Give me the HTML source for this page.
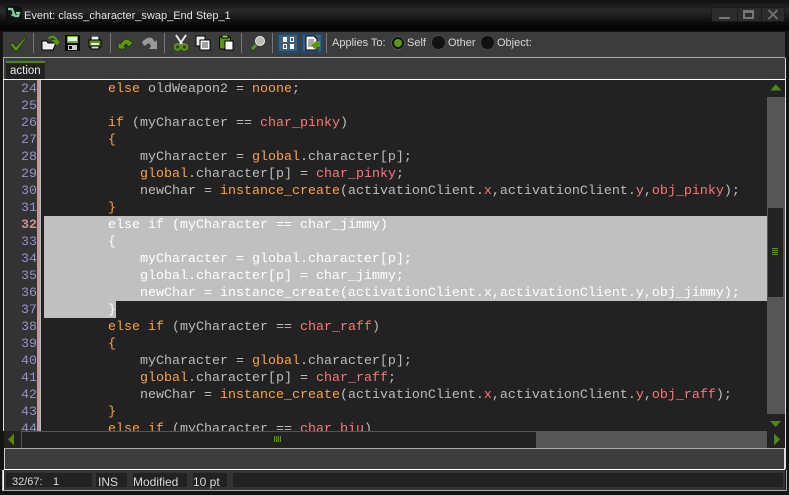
<!DOCTYPE html>
<html><head><meta charset="utf-8">
<style>
html,body{margin:0;padding:0;background:#111;}
#w{position:relative;width:789px;height:495px;overflow:hidden;background:#131313;font-family:"Liberation Sans",sans-serif;}
.a{position:absolute;}
#code{position:absolute;left:44px;top:80px;width:723px;height:351px;overflow:hidden;background:#222;}
.l{position:absolute;left:0;margin-top:1px;height:17px;font:13.33px/17px "Liberation Mono",monospace;color:#bcbcbc;white-space:pre;}
.k{color:#f9a24a;}.s{color:#fb7878;}
.sel .l{color:#fff;}
.n{position:absolute;left:4px;margin-top:1px;width:33px;text-align:right;font:13.33px/17px "Liberation Mono",monospace;color:#9292cc;}
.t{position:absolute;font-size:11px;line-height:14px;color:#d8d8d8;white-space:pre;}
.sep{position:absolute;top:33px;width:1px;height:20px;background:#777;}
.st{position:absolute;top:473px;height:14px;background:#222;}
</style></head><body><div id="w">
<div class="a" style="left:0;top:2px;width:789px;height:29px;background:linear-gradient(#141414,#2a2a2a 30%,#141414 60%,#060606 80%,#050505)"></div>
<div class="a" style="left:6px;top:6px;width:16px;height:16px;background:#111;border-radius:3px"></div>
<svg class="a" style="left:7px;top:7px" width="15" height="13" viewBox="0 0 15 13"><path d="M1 2h4l3 7h3l1-3h-3M5 9l2-3" fill="none" stroke="#7fd09a" stroke-width="2.200"/></svg>
<div class="t" style="left:24px;top:9px;color:#e4e4e4;font-size:11px">Event: class_character_swap_End Step_1</div>
<div class="a" style="left:711px;top:7px;width:74px;height:15px;background:#2c2c2c;border:1px solid #1a1a1a;box-sizing:border-box"></div>
<div class="a" style="left:737px;top:7px;width:1px;height:15px;background:#1a1a1a"></div>
<div class="a" style="left:761px;top:7px;width:1px;height:15px;background:#1a1a1a"></div>
<div class="a" style="left:719px;top:17px;width:11px;height:2px;background:#777"></div>
<div class="a" style="left:743px;top:10px;width:11px;height:9px;box-sizing:border-box;border:2px solid #777;border-top-width:3px"></div>
<svg class="a" style="left:767px;top:9px" width="12" height="11"><path d="M1.500 1l9 9M10.500 1l-9 9" stroke="#777" stroke-width="1.600"/></svg>

<div class="a" style="left:3px;top:32px;width:782px;height:25px;background:#3c3c3c"></div>
<div class="a" style="left:3px;top:57px;width:782px;height:1px;background:#aaa"></div>
<div class="a" style="left:3px;top:58px;width:1px;height:22px;background:#aaa"></div>
<div class="a" style="left:785px;top:58px;width:1px;height:390px;background:#ddd"></div>
<div class="a" style="left:4px;top:58px;width:781px;height:22px;background:#3c3c3c"></div>
<div class="a" style="left:6px;top:61px;width:39px;height:18px;background:#222"></div>
<div class="a" style="left:6px;top:61px;width:39px;height:2px;background:#4e8a10"></div>
<div class="t" style="left:10px;top:64px;color:#e8e8e8;font-size:11.500px">action</div>
<div class="a" style="left:3px;top:79px;width:782px;height:1px;background:#fff"></div>

<svg class="a" style="left:8px;top:35px" width="20" height="18"><path d="M2 9l3-1 3 4L17 2l1 1-9 13H7z" fill="#5a9a10" stroke="#1a2a08" stroke-width=".7"/></svg>
<div class="sep" style="left:33px"></div>
<svg class="a" style="left:40px;top:34px" width="20" height="18"><path d="M2 7h5l1 2h8l-3 7H2z" fill="#eee" stroke="#000"/><path d="M9 5c1-3 5-3 7 0l1 2h-3l3 3 2-3" fill="none" stroke="#5a9a10" stroke-width="2"/></svg>
<svg class="a" style="left:65px;top:35px" width="16" height="16"><rect width="15" height="16" fill="#000"/><rect x="2" y="1" width="11" height="7" fill="#6cb41c"/><rect x="3" y="2" width="9" height="4" fill="#eee"/><rect x="3" y="10" width="9" height="5" fill="#ccc"/><rect x="4" y="11" width="3" height="3" fill="#000"/></svg>
<svg class="a" style="left:88px;top:36px" width="14" height="14"><rect x="3" y="0" width="8" height="5" fill="#eee" stroke="#000"/><rect x="1" y="4" width="12" height="7" fill="#5a9a10" stroke="#000"/><rect x="3" y="7" width="8" height="2" fill="#eee"/><rect x="3" y="10" width="8" height="3" fill="#cde" stroke="#000"/></svg>
<div class="sep" style="left:110px"></div>
<svg class="a" style="left:117px;top:37px" width="18" height="13"><path d="M1 12V5l2 2 4-4c3-2 6 0 9 3l-4 4-3-3-2 2 2 3z" fill="#5a9a10" stroke="#1a2a08" stroke-width=".7"/></svg>
<svg class="a" style="left:140px;top:37px" width="18" height="13"><path d="M17 12V3l-2 2-3-4C9 0 6 1 2 5l2 4 5-3 2 3-2 3z" fill="#999"/></svg>
<div class="sep" style="left:164px"></div>
<svg class="a" style="left:173px;top:34px" width="16" height="17"><path d="M3 1l6 9M13 1L7 10" stroke="#e8e8e8" stroke-width="2"/><circle cx="4.500" cy="13" r="2.800" fill="none" stroke="#5a9a10" stroke-width="2"/><circle cx="11.500" cy="13" r="2.800" fill="none" stroke="#5a9a10" stroke-width="2"/></svg>
<svg class="a" style="left:195px;top:35px" width="16" height="16"><rect x="1" y="1" width="9" height="10" fill="#eee" stroke="#000"/><rect x="5" y="5" width="10" height="10" fill="#fff" stroke="#000"/><path d="M7 8h6M7 10h6M7 12h6" stroke="#444"/></svg>
<svg class="a" style="left:219px;top:35px" width="15" height="16"><rect x="0.500" y="2" width="11" height="12" rx="1" fill="#5a9a10" stroke="#000"/><rect x="3" y="0" width="6" height="3" fill="#9c6" stroke="#000"/><rect x="6" y="6" width="8" height="9" fill="#fff" stroke="#000"/></svg>
<div class="sep" style="left:241px"></div>
<svg class="a" style="left:250px;top:35px" width="16" height="16"><circle cx="10" cy="6" r="4.500" fill="#bbb" stroke="#eee"/><path d="M6 10l-4 4" stroke="#5a9a10" stroke-width="3"/></svg>
<div class="sep" style="left:272px"></div>
<div class="a" style="left:277px;top:33px;width:22px;height:20px;box-sizing:border-box;background:#3f5f78;border:2px solid #1b4a72"></div>
<svg class="a" style="left:282px;top:36px" width="13" height="14"><path d="M1 8h4v5H1zM8 1h4v5H8zM1 1h4v5H1zM8 8h4v5H8z" fill="#fff"/><path d="M2 9h2v3H2zM9 2h2v3H9z" fill="#3f5f78"/></svg>
<div class="a" style="left:301px;top:33px;width:22px;height:20px;box-sizing:border-box;background:#3f5f78;border:2px solid #1b4a72"></div>
<svg class="a" style="left:304px;top:35px" width="17" height="16"><path d="M2 1h8l3 3v11H2z" fill="#fff" stroke="#000"/><path d="M4 5h6M4 7h6M4 9h5M4 11h5" stroke="#555"/><path d="M16 6v3h0v3h-4v3l-5-4.500L12 6z" fill="#5a9a10"/></svg>
<div class="sep" style="left:326px"></div>
<div class="t" style="left:332px;top:36px">Applies To:</div>
<div class="a" style="left:392px;top:37px;width:12px;height:12px;box-sizing:border-box;border-radius:50%;background:#5a9a10;border:2px solid #111;box-shadow:0 0 0 1px #555"></div>
<div class="t" style="left:407px;top:36px">Self</div>
<div class="a" style="left:432px;top:36px;width:13px;height:13px;border-radius:50%;background:#111;box-shadow:0 0 0 1px #444"></div>
<div class="t" style="left:448px;top:36px">Other</div>
<div class="a" style="left:481px;top:36px;width:13px;height:13px;border-radius:50%;background:#111;box-shadow:0 0 0 1px #444"></div>
<div class="t" style="left:497px;top:36px">Object:</div>

<div class="a" style="left:3px;top:80px;width:1px;height:351px;background:#ddd"></div>
<div class="a" style="left:4px;top:80px;width:33px;height:351px;background:#333"></div>
<div class="a" style="left:37px;top:80px;width:3px;height:351px;background:#c89898"></div>
<div class="a" style="left:40px;top:80px;width:1px;height:351px;background:#bbb"></div>
<div class="a" style="left:41px;top:80px;width:3px;height:351px;background:#222"></div>
<div class="a" style="left:4px;top:80px;width:33px;height:351px;overflow:hidden">
<div style="position:absolute;left:-4px;top:0;width:37px;height:351px">
<div class="n" style="top:0">24</div><div class="n" style="top:17px">25</div><div class="n" style="top:34px">26</div><div class="n" style="top:51px">27</div><div class="n" style="top:68px">28</div><div class="n" style="top:85px">29</div><div class="n" style="top:102px">30</div><div class="n" style="top:119px">31</div><div class="n" style="top:136px;font-weight:bold;color:#d09090">32</div><div class="n" style="top:153px">33</div><div class="n" style="top:170px">34</div><div class="n" style="top:187px">35</div><div class="n" style="top:204px">36</div><div class="n" style="top:221px">37</div><div class="n" style="top:238px">38</div><div class="n" style="top:255px">39</div><div class="n" style="top:272px">40</div><div class="n" style="top:289px">41</div><div class="n" style="top:306px">42</div><div class="n" style="top:323px">43</div><div class="n" style="top:340px">44</div>
</div></div>

<div id="code">
<div class="a" style="left:0;top:136px;width:723px;height:85px;background:#c0c0c0"></div>
<div class="a" style="left:0;top:221px;width:72px;height:17px;background:#c0c0c0"></div>
<div class="l" style="top:0">        <span class="k">else</span> oldWeapon2 = <span class="k">noone</span>;</div>
<div class="l" style="top:34px">        <span class="k">if</span> (myCharacter == <span class="s">char_pinky</span>)</div>
<div class="l" style="top:51px">        <span class="k">{</span></div>
<div class="l" style="top:68px">            myCharacter = <span class="k">global</span>.character[p];</div>
<div class="l" style="top:85px">            <span class="k">global</span>.character[p] = <span class="s">char_pinky</span>;</div>
<div class="l" style="top:102px">            newChar = <span class="k">instance_create</span>(activationClient.<span class="s">x</span>,activationClient.<span class="s">y</span>,<span class="s">obj_pinky</span>);</div>
<div class="l" style="top:119px">        <span class="k">}</span></div>
<div class="sel">
<div class="l" style="top:136px">        else if (myCharacter == char_jimmy)</div>
<div class="l" style="top:153px">        {</div>
<div class="l" style="top:170px">            myCharacter = global.character[p];</div>
<div class="l" style="top:187px">            global.character[p] = char_jimmy;</div>
<div class="l" style="top:204px">            newChar = instance_create(activationClient.x,activationClient.y,obj_jimmy);</div>
<div class="l" style="top:221px">        }</div>
</div>
<div class="l" style="top:238px">        <span class="k">else if</span> (myCharacter == <span class="s">char_raff</span>)</div>
<div class="l" style="top:255px">        <span class="k">{</span></div>
<div class="l" style="top:272px">            myCharacter = <span class="k">global</span>.character[p];</div>
<div class="l" style="top:289px">            <span class="k">global</span>.character[p] = <span class="s">char_raff</span>;</div>
<div class="l" style="top:306px">            newChar = <span class="k">instance_create</span>(activationClient.<span class="s">x</span>,activationClient.<span class="s">y</span>,<span class="s">obj_raff</span>);</div>
<div class="l" style="top:323px">        <span class="k">}</span></div>
<div class="l" style="top:340px">        <span class="k">else if</span> (myCharacter == <span class="s">char_biu</span>)</div>
</div>

<div class="a" style="left:767px;top:80px;width:18px;height:351px;background:#222"></div>
<div class="a" style="left:767px;top:97px;width:18px;height:317px;background:#565656"></div>
<div class="a" style="left:768px;top:208px;width:15px;height:89px;background:#232323"></div>
<div class="a" style="left:772px;top:248px;width:6px;height:8px;background:repeating-linear-gradient(#5a9a10 0 1px,#222 1px 2px)"></div>
<svg class="a" style="left:769px;top:84px" width="14" height="8"><path d="M1.500 6.500L6.500.5h.5l5.500 6z" fill="#4e8a10"/></svg>
<svg class="a" style="left:769px;top:420px" width="14" height="8"><path d="M1 1h11L6.500 7z" fill="#4e8a10"/></svg>

<div class="a" style="left:4px;top:431px;width:781px;height:17px;background:#222"></div>
<div class="a" style="left:21px;top:431px;width:515px;height:1px;background:#555"></div>
<div class="a" style="left:21px;top:431px;width:1px;height:17px;background:#555"></div>
<div class="a" style="left:536px;top:431px;width:231px;height:17px;background:#565656"></div>
<div class="a" style="left:274px;top:436px;width:8px;height:6px;background:repeating-linear-gradient(90deg,#5a9a10 0 1px,#222 1px 2px)"></div>
<svg class="a" style="left:7px;top:433px" width="8" height="13"><path d="M7 .5v12L1 6.500z" fill="#4e8a10"/></svg>
<svg class="a" style="left:773px;top:433px" width="8" height="13"><path d="M1 .5v12l6-6z" fill="#4e8a10"/></svg>

<div class="a" style="left:4px;top:448px;width:780px;height:21px;background:#3c3c3c"></div>
<div class="a" style="left:4px;top:448px;width:781px;height:1px;background:#aaa"></div>
<div class="a" style="left:4px;top:469px;width:781px;height:1px;background:#fff"></div>
<div class="a" style="left:4px;top:448px;width:1px;height:21px;background:#ccc"></div>
<div class="a" style="left:784px;top:448px;width:2px;height:21px;background:#ddd"></div>
<div class="a" style="left:4px;top:470px;width:781px;height:20px;background:#333"></div>
<div class="a" style="left:2px;top:490px;width:785px;height:1px;background:#aaa"></div>
<div class="a" style="left:2px;top:470px;width:1px;height:21px;background:#bbb"></div>
<div class="a" style="left:786px;top:470px;width:1px;height:21px;background:#aaa"></div>
<div class="a" style="left:3px;top:470px;width:1px;height:20px;background:#fff"></div>
<div class="st" style="left:6px;width:86px"></div>
<div class="st" style="left:96px;width:31px"></div>
<div class="st" style="left:133px;width:54px"></div>
<div class="st" style="left:193px;width:34px"></div>
<div class="st" style="left:233px;width:550px"></div>
<div class="t" style="left:12px;top:475px">32/67:</div>
<div class="t" style="left:53px;top:475px">1</div>
<div class="t" style="left:98px;top:475px;font-size:12px">INS</div>
<div class="t" style="left:133px;top:475px;font-size:12px">Modified</div>
<div class="t" style="left:193px;top:475px;font-size:12px">10 pt</div>
</div></body></html>
